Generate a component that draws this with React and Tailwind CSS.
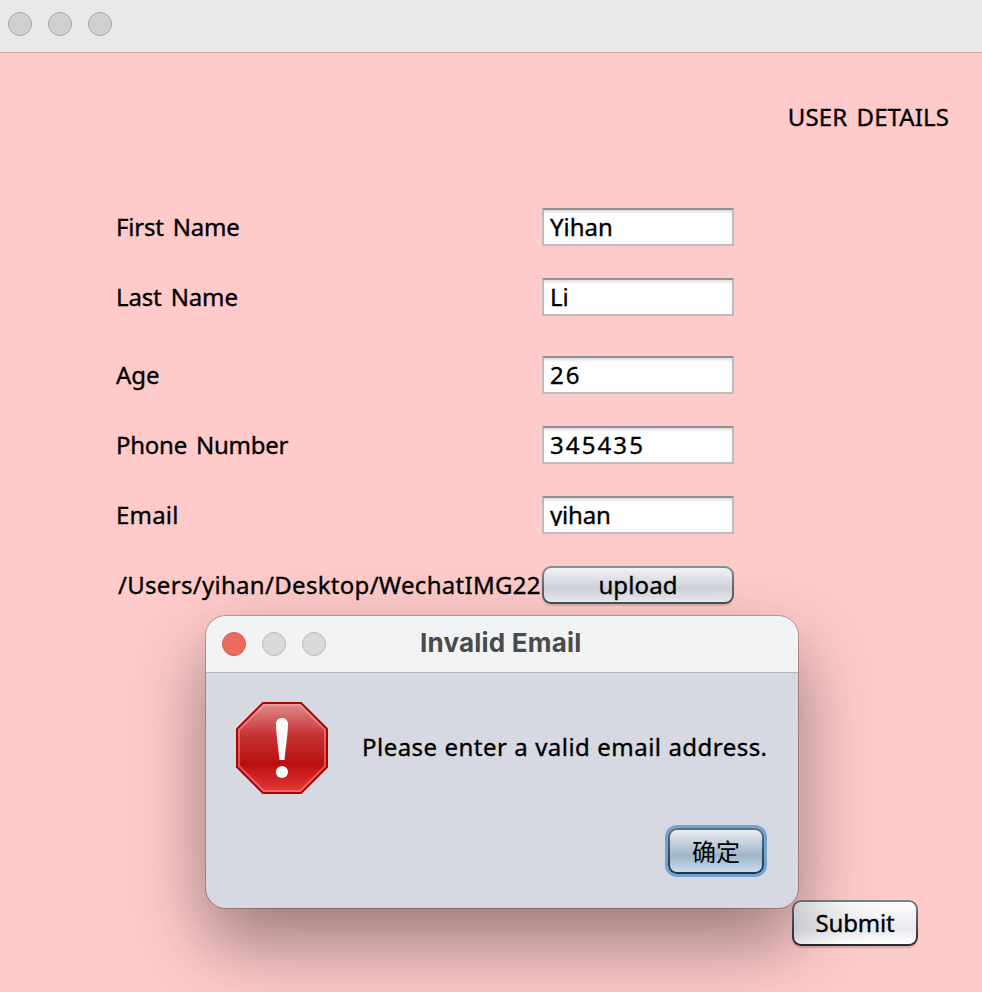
import React from "react";

const inputs = [
  { label: "First Name", value: "Yihan", gap: "mt-0", labelTrack: "tracking-[-0.2px]", valueTrack: "tracking-[0px]" },
  { label: "Last Name", value: "Li", gap: "mt-8", labelTrack: "tracking-[-0.15px]", valueTrack: "tracking-[0px]" },
  { label: "Age", value: "26", gap: "mt-10", labelTrack: "tracking-[0px]", valueTrack: "tracking-[2px]" },
  { label: "Phone Number", value: "345435", gap: "mt-8", labelTrack: "tracking-[-0.25px]", valueTrack: "tracking-[2.1px]" },
  { label: "Email", value: "yihan", gap: "mt-8", labelTrack: "tracking-[0.2px]", valueTrack: "tracking-[-0.2px]", clip: "h-[28px] overflow-hidden" },
];

function FormRow({ label, value, gap, labelTrack, valueTrack, clip = "" }) {
  return (
    <div className={`flex h-[38px] items-center ${gap}`}>
      <span className={`w-[427px] pl-px whitespace-nowrap [word-spacing:3px] ${labelTrack}`}>{label}</span>
      <div className="h-[38px] w-48 border-2 border-[#bcbcbc] border-t-[#8f9193] bg-white bg-linear-to-b from-[#dcdcdc] to-white to-[4px] px-[6px]">
        <div className={`leading-[34px] ${valueTrack} ${clip}`}>{value}</div>
      </div>
    </div>
  );
}

function WindowDot({ className }) {
  return <span className={`size-6 rounded-full border ${className}`} />;
}

function ErrorIcon() {
  return (
    <svg width="92" height="92" viewBox="0 0 92 92">
      <defs>
        <linearGradient id="stop" x1="0" y1="0" x2="0" y2="1">
          <stop offset="0" stopColor="#e08a8a" />
          <stop offset="0.35" stopColor="#c63436" />
          <stop offset="0.68" stopColor="#ba0f10" />
          <stop offset="1" stopColor="#e63838" />
        </linearGradient>
      </defs>
      <path d="M26.5 0h39L92 26.5v39L65.5 92h-39L0 65.5v-39z" fill="#b00000" />
      <path d="M27.3 2h37.4L90 27.3v37.4L64.7 90H27.3L2 64.7V27.3z" fill="url(#stop)" />
      <path d="M27.8 3h36.4L89 27.8v36.4L64.2 89H27.8L3 64.2V27.8z" fill="none" stroke="#ffb0b0" strokeOpacity="0.42" strokeWidth="2" />
      <path d="M40 22c0-8 12-8 12 0 0 9-2.2 23-3.5 36h-5C42.2 45 40 31 40 22z" fill="#fafafa" />
      <circle cx="46" cy="70" r="6.1" fill="#fafafa" />
    </svg>
  );
}

export default function App() {
  return (
    <div className="relative flex h-[992px] w-[982px] flex-col overflow-hidden bg-[#fecbca] font-['Noto_Sans','Noto_Sans_CJK_SC',sans-serif] text-[24px] leading-[34px] text-black [-webkit-text-stroke:0.35px_black]">
      <header className="flex h-[53px] shrink-0 items-start gap-4 border-b border-[#d3a3a3] bg-[#e9e9e9] pt-3 pl-2">
        <WindowDot className="border-[#a9a9a9] bg-[#d0d0d0]" />
        <WindowDot className="border-[#a9a9a9] bg-[#d0d0d0]" />
        <WindowDot className="border-[#a9a9a9] bg-[#d0d0d0]" />
      </header>

      <main className="flex flex-col">
        <h1 className="mt-[47px] mr-[33px] self-end tracking-[0.1px] [word-spacing:3px]">USER DETAILS</h1>
        <div className="mt-[74px] ml-[115px] flex flex-col">
          {inputs.map((row) => (
            <FormRow key={row.label} {...row} />
          ))}
          <div className="mt-8 flex h-[38px] items-center">
            <span className="w-[427px] pl-[3px] tracking-[0.3px] whitespace-nowrap">/Users/yihan/Desktop/WechatIMG22</span>
            <button className="h-[38px] w-48 rounded-[9px] bg-linear-to-b from-[#889196] to-[#474e54] p-[2px] shadow-[0_2px_1px_rgba(120,70,70,0.2)]">
              <span className="block h-[34px] rounded-[7px] bg-linear-to-b from-[#f2f3f5] via-[#d2d5dd] via-60% to-[#f0f1f4] tracking-[0.1px]">upload</span>
            </button>
          </div>
        </div>
        <button className="mt-[296px] mr-16 h-[46px] w-[126px] self-end rounded-[9px] bg-linear-to-b from-[#7d8288] to-[#25292f] p-[2px] shadow-[0_2px_1px_rgba(120,70,70,0.25)]">
          <span className="block h-[42px] rounded-[7px] bg-linear-to-b from-[#fdfdfe] via-[#e8eaf0] via-65% to-white leading-[42px] tracking-[-0.2px]">Submit</span>
        </button>
      </main>

      <section className="absolute top-[616px] left-[206px] flex h-[292px] w-[592px] flex-col overflow-hidden rounded-[20px] bg-[#d6d9e1] shadow-[0_0_0_1px_rgba(80,30,30,0.3),0_33px_76px_0_rgba(0,0,0,0.41)]">
        <header className="relative flex h-[57px] shrink-0 items-center gap-4 border-b border-[#b3b6ba] bg-[#f2f3f5] pl-4">
          <WindowDot className="border-[#d95850] bg-[#ed6a5e]" />
          <WindowDot className="border-[#b7b9bb] bg-[#d8d9db]" />
          <WindowDot className="border-[#b7b9bb] bg-[#d8d9db]" />
          <h2 className="ml-[78px] pb-[2px] font-['Inter',sans-serif] text-[26px] font-bold tracking-[0.2px] whitespace-nowrap text-[#4a4b4c] [-webkit-text-stroke:0]">Invalid Email</h2>
        </header>
        <div className="flex items-center pt-[29px] pl-[30px]">
          <ErrorIcon />
          <p className="ml-[34px] pb-[2px] tracking-[0.46px] whitespace-nowrap [word-spacing:0.3px]">Please enter a valid email address.</p>
        </div>
        <button className="mt-[34px] mr-[34px] ml-auto h-[46px] w-24 self-end rounded-[9px] bg-linear-to-b from-[#5c7380] to-[#203447] p-[2px] shadow-[0_0_0_3px_#73a4d1]">
          <span className="block h-[42px] rounded-[7px] bg-linear-to-b from-[#eaeef3] via-[#a1b5c9] via-60% to-[#c8dced] font-['Noto_Sans_CJK_SC',sans-serif] leading-[42px] [-webkit-text-stroke:0]">确定</span>
        </button>
      </section>
    </div>
  );
}
